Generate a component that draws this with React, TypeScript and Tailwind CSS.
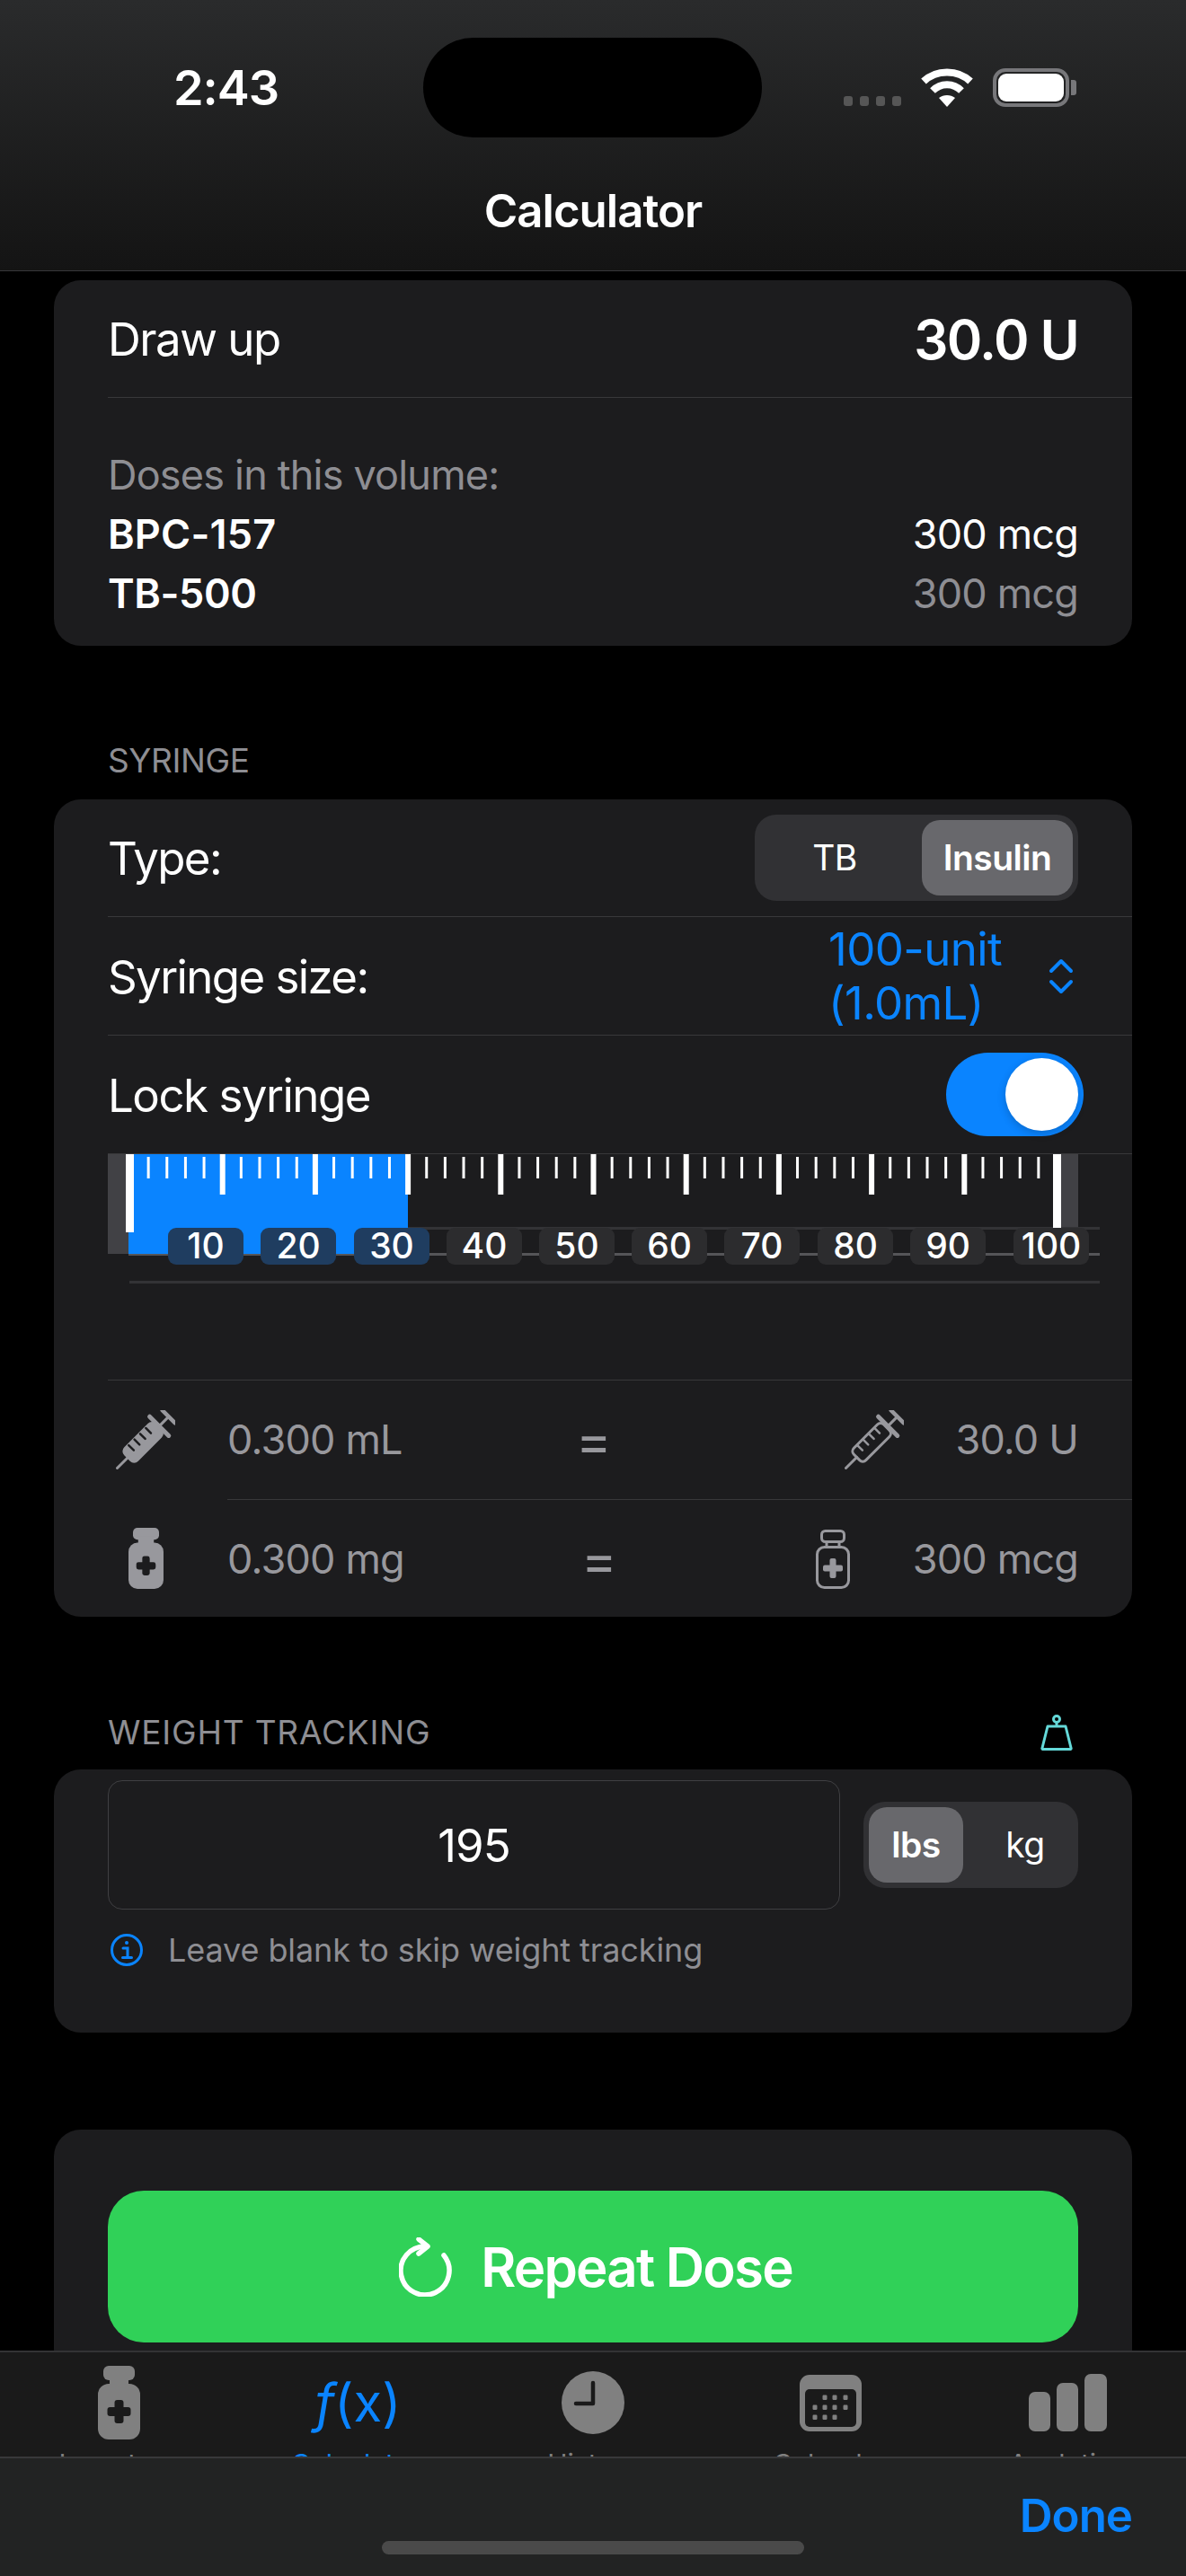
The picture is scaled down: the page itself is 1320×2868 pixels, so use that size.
const BLUE = '#0a84ff'

const TICKS = Array.from({ length: 51 }, (_, i) => i * 2)
const TAG_X = [229, 332, 436, 539, 642, 745, 848, 952, 1055, 1170]
const unitX = (u: number) => 24.5 + u * 10.32

const TABS = [
  { label: 'Inventory', icon: <Vial w={47} h={82} fill="#808080" cut="#1a1a1a" /> },
  {
    label: 'Calculator',
    icon: (
      <span className="pl-[5px] text-[58px] leading-none text-[#0a84ff]">
        <span className="italic">f</span>(x)
      </span>
    ),
    active: true,
  },
  { label: 'History', icon: <ClockIcon /> },
  { label: 'Calendar', icon: <CalendarIcon /> },
  { label: 'Analytics', icon: <BarsIcon /> },
]

function Vial({ w, h, fill, cut }: { w: number; h: number; fill: string; cut: string }) {
  return (
    <svg width={w} height={h} viewBox="0 0 47 82" fill={fill}>
      <rect x="6" y="0" width="35" height="16" rx="6" />
      <rect x="13" y="12" width="21" height="12" />
      <rect x="0" y="20" width="47" height="62" rx="12" />
      <rect x="18.5" y="38" width="10" height="26" rx="3" fill={cut} />
      <rect x="10.5" y="46" width="26" height="10" rx="3" fill={cut} />
    </svg>
  )
}

function VialOutline() {
  return (
    <svg width="38" height="66" viewBox="0 0 38 66" fill="none" stroke="#98989d" strokeWidth="3">
      <rect x="6.5" y="1.5" width="25" height="12" rx="4" />
      <path d="M12 14v6M26 14v6" />
      <rect x="1.5" y="19.5" width="35" height="45" rx="8" />
      <rect x="15.5" y="32" width="7" height="22" rx="2" fill="#98989d" stroke="none" />
      <rect x="8" y="39.5" width="22" height="7" rx="2" fill="#98989d" stroke="none" />
    </svg>
  )
}

function Syringe({ filled }: { filled?: boolean }) {
  return (
    <svg width="66" height="66" viewBox="0 0 66 66" fill="none" stroke="#98989d" strokeWidth="3" strokeLinecap="round">
      <g transform="translate(1.5 64.5) rotate(-45)">
        <path d="M0 0H17" />
        <rect x="17" y="-9.5" width="47" height="19" rx="5" fill={filled ? '#98989d' : 'none'} />
        {[27, 36, 45, 54].map(x => (
          <path key={x} d={`M${x} -9V-1`} stroke={filled ? '#1c1c1e' : '#98989d'} strokeWidth="2.5" />
        ))}
        <path d="M66 -15V15" strokeWidth="5" />
        <path d="M66 0H80" />
        <path d="M81 -10V10" strokeWidth="4.5" />
      </g>
    </svg>
  )
}

function ClockIcon() {
  return (
    <svg width="70" height="70" viewBox="0 0 70 70">
      <circle cx="35" cy="35" r="35" fill="#808080" />
      <path d="M35 13V36H16" fill="none" stroke="#1a1a1a" strokeWidth="4.5" strokeLinecap="round" strokeLinejoin="round" />
    </svg>
  )
}

function CalendarIcon() {
  const dots = [
    [28, 25], [39, 25], [51, 25],
    [17, 36], [28, 36], [39, 36], [51, 36],
    [17, 47], [28, 47], [39, 47],
  ]
  return (
    <svg width="69" height="63" viewBox="0 0 69 63">
      <rect width="69" height="63" rx="11" fill="#808080" />
      <rect x="6" y="16" width="57" height="42" rx="5" fill="#1a1a1a" />
      {dots.map(([x, y]) => (
        <rect key={`${x}-${y}`} x={x - 2.5} y={y - 2.5} width="5" height="5.5" rx="1.2" fill="#808080" />
      ))}
    </svg>
  )
}

function BarsIcon() {
  return (
    <svg width="87" height="64" viewBox="0 0 87 64" fill="#808080">
      <rect x="0" y="20" width="24" height="44" rx="7" />
      <rect x="31" y="10" width="24" height="54" rx="7" />
      <rect x="62" y="0" width="25" height="64" rx="7" />
    </svg>
  )
}

function SyringeRuler() {
  return (
    <svg width="1140" height="251" viewBox="0 0 1140 251" className="block">
      <rect x="0" y="0" width="23" height="111" fill="#414145" />
      <rect x="1061" y="0" width="19" height="81" fill="#414145" />
      <rect x="23" y="81" width="1081" height="3" fill="#333336" />
      <rect x="23" y="110" width="1081" height="3" fill="#555558" />
      <rect x="24" y="141" width="1080" height="3" fill="#333336" />
      <rect x="23" y="0" width="311" height="111" fill={BLUE} />
      {TICKS.map(u => {
        const major = u % 10 === 0
        const end = u === 0 || u === 100
        const x = unitX(u)
        if (end) return <rect key={u} x={u === 0 ? 20 : 1052} y="0" width="9" height="87" fill="#fff" />
        return major ? (
          <rect key={u} x={x - 3} y="0" width="6" height="45" fill="#fff" />
        ) : (
          <rect key={u} x={x - 1.5} y="3" width="3" height="24" fill="#fff" />
        )
      })}
      {TAG_X.map((x, i) => {
        const cx = x - 120
        return (
          <g key={x}>
            <rect x={cx - 42} y="82" width="84" height="41" rx="9" fill={i < 3 ? '#1f3d60' : '#2c2c2e'} />
            <text x={cx} y="116" textAnchor="middle" fontSize="39" fontWeight="500" fill="#fff" fontFamily="Inter, sans-serif">
              {(i + 1) * 10}
            </text>
          </g>
        )
      })}
    </svg>
  )
}

function Segmented({ left, right, active }: { left: string; right: string; active: 'left' | 'right' }) {
  const on = 'bg-[#68686c] font-semibold rounded-[20px]'
  return (
    <div className="flex h-[96px] items-stretch rounded-[24px] bg-[#313134] p-[6px] text-[39px] tracking-[-0.5px] text-white">
      <div className={`flex items-center justify-center ${active === 'left' ? on : ''} ${left === 'lbs' ? 'w-[105px]' : 'w-[180px] pr-[14px]'}`}>
        {left}
      </div>
      <div className={`flex items-center justify-center ${active === 'right' ? on : ''} ${right === 'kg' ? 'w-[122px] pl-[16px]' : 'w-[168px]'}`}>
        {right}
      </div>
    </div>
  )
}

function SectionLabel({ children }: { children: React.ReactNode }) {
  return (
    <div className="flex h-[46px] items-center justify-between pl-[60px] pr-[65px] pt-[2px] text-[37px] leading-[46px] tracking-[-0.4px] text-[#8e8e93]">
      {children}
    </div>
  )
}

export default function App() {
  return (
    <div className="flex h-[2868px] w-[1320px] flex-col overflow-hidden bg-black text-white [font-family:Inter,'Noto_Sans',sans-serif]">
      {/* status + nav */}
      <header className="relative h-[302px] shrink-0 border-b border-[#38383a] bg-gradient-to-b from-[#2a2b2c] to-[#141414]">
        <div className="flex h-[194px] items-center">
          <div className="flex w-[471px] justify-center pl-[32px] text-[54px] font-semibold tracking-[-1px]">2:43</div>
          <div className="h-[111px] w-[377px] rounded-[56px] bg-black" />
          <div className="ml-[91px] flex items-end gap-[22px]">
            <div className="mb-[1px] flex gap-[8px]">
              {[0, 1, 2, 3].map(i => (
                <div key={i} className="h-[11px] w-[10px] rounded-[3px] bg-[#565656]" />
              ))}
            </div>
            <svg width="58" height="43" viewBox="0 0 58 43" fill="none" stroke="#fff" strokeWidth="8">
              <path d="M3 14.5C17 1 41 1 55 14.5" />
              <path d="M13 25C22 16 36 16 45 25" />
              <path d="M29 43L20 33C25 29 33 29 38 33Z" fill="#fff" stroke="none" />
            </svg>
            <div className="flex items-center">
              <div className="h-[43px] w-[85px] rounded-[14px] border-[4px] border-[#77777a] p-[2px]">
                <div className="h-full w-full rounded-[9px] bg-white" />
              </div>
              <div className="ml-[2px] h-[17px] w-[6px] rounded-r-[3px] bg-[#77777a]" />
            </div>
          </div>
        </div>
        <div className="mt-[9px] text-center text-[51px] font-semibold leading-[64px] tracking-[-1px]">Calculator</div>
      </header>

      <main className="flex-1 overflow-hidden px-[60px] pt-[10px]">
        {/* dose summary */}
        <section className="h-[407px] rounded-[30px] bg-[#1c1c1e]">
          <div className="ml-[60px] flex h-[131px] items-center justify-between border-b border-[#38383a] pr-[60px] pt-[2px]">
            <span className="text-[51px] tracking-[-1.5px]">Draw up</span>
            <span className="text-[60px] font-semibold tracking-[-1.6px]">30.0 U</span>
          </div>
          <div className="px-[60px] pt-[53px] text-[45px] leading-[66px] tracking-[-0.8px]">
            <div className="text-[#8e8e93]">Doses in this volume:</div>
            <div className="flex justify-between">
              <span className="font-semibold tracking-[0.2px]">BPC-157</span>
              <span>300 mcg</span>
            </div>
            <div className="flex justify-between">
              <span className="font-semibold tracking-[-0.4px]">TB-500</span>
              <span className="text-[#8e8e93]">300 mcg</span>
            </div>
          </div>
        </section>

        <div className="mt-[104px] mb-[21px]">
          <SectionLabel>SYRINGE</SectionLabel>
        </div>
        <section className="h-[910px] rounded-[30px] bg-[#1c1c1e]">
          <div className="ml-[60px] flex h-[131px] items-center justify-between border-b border-[#38383a] pr-[60px] text-[51px] tracking-[-1.6px]">
            <span className="pt-[3px]">Type:</span>
            <Segmented left="TB" right="Insulin" active="right" />
          </div>
          <div className="ml-[60px] flex h-[132px] items-center justify-between border-b border-[#38383a] pr-[60px] text-[51px] tracking-[-1.6px]">
            <span className="pt-[3px]">Syringe size:</span>
            <div className="flex items-center text-[#0a84ff]">
              <div className="w-[245px] leading-[60px] tracking-[-0.6px]">
                100-unit
                <br />
                (1.0mL)
              </div>
              <svg width="28" height="40" viewBox="0 0 28 40" fill="none" stroke="#0a84ff" strokeWidth="4" strokeLinecap="round" strokeLinejoin="round" className="mr-[5px]">
                <path d="M3 14L14 3L25 14" />
                <path d="M3 26L14 37L25 26" />
              </svg>
            </div>
          </div>
          <div className="ml-[60px] flex h-[132px] items-center justify-between border-b border-[#38383a] pr-[54px] text-[51px] tracking-[-1.5px]">
            <span className="pt-[3px]">Lock syringe</span>
            <div className="flex h-[93px] w-[153px] items-center justify-end rounded-full bg-[#0a84ff] pr-[6px]">
              <div className="h-[81px] w-[81px] rounded-full bg-white shadow-[0_3px_10px_rgba(0,0,0,0.2)]" />
            </div>
          </div>
          <div className="ml-[60px] h-[252px] border-b border-[#38383a]">
            <SyringeRuler />
          </div>
          <div className="ml-[60px] flex h-[132px] items-center pr-[60px] text-[45px] tracking-[-0.8px] text-[#98989d]">
            <div className="flex w-[84px] justify-center">
              <Syringe filled />
            </div>
            <span className="ml-[49px] w-[388px]">0.300 mL</span>
            <span className="text-[60px] leading-none">=</span>
            <div className="ml-auto flex items-center gap-[57px]">
              <Syringe />
              <span>30.0 U</span>
            </div>
          </div>
          <div className="ml-[60px] flex h-[132px] items-center pr-[60px] text-[45px] tracking-[-0.8px] text-[#98989d]">
            <div className="flex w-[84px] justify-center">
              <Vial w={39} h={68} fill="#98989d" cut="#1c1c1e" />
            </div>
            <div className="ml-[49px] -mr-[60px] flex h-full flex-1 items-center border-t border-[#38383a] pr-[60px]">
              <span className="w-[394px]">0.300 mg</span>
              <span className="text-[60px] leading-none">=</span>
              <div className="ml-auto flex items-center gap-[70px]">
                <VialOutline />
                <span>300 mcg</span>
              </div>
            </div>
          </div>
        </section>

        <div className="mt-[105px] mb-[19px]">
          <SectionLabel>
            <span className="tracking-[0.8px]">WEIGHT TRACKING</span>
            <svg width="38" height="40" viewBox="0 0 38 40" fill="none" stroke="#64d8d8" strokeWidth="3">
              <circle cx="19" cy="5" r="3.5" />
              <path d="M19 9v4" />
              <path d="M9 13h20l6 24a1 1 0 0 1-1 1.5H4a1 1 0 0 1-1-1.5Z" strokeLinejoin="round" />
            </svg>
          </SectionLabel>
        </div>
        <section className="h-[293px] rounded-[30px] bg-[#1c1c1e] px-[60px] pt-[12px]">
          <div className="flex items-center justify-between">
            <div className="flex h-[144px] w-[815px] items-center justify-center rounded-[16px] border border-[#3f3f42] pt-[2px] text-[51px] tracking-[-1px]">
              195
            </div>
            <Segmented left="lbs" right="kg" active="left" />
          </div>
          <div className="mt-[18px] flex items-center text-[36px] tracking-[-0.1px] text-[#8e8e93]">
            <svg width="36" height="36" viewBox="0 0 36 36" fill="none" stroke="#0a84ff" strokeWidth="3" className="ml-[3px]">
              <circle cx="18" cy="18" r="16.5" />
              <path d="M14 16h5v10M13.5 26.5h10" strokeLinecap="round" />
              <circle cx="18" cy="10" r="2" fill="#0a84ff" stroke="none" />
            </svg>
            <span className="ml-[28px]">Leave blank to skip weight tracking</span>
          </div>
        </section>

        <section className="mt-[108px] h-[400px] rounded-[30px] bg-[#1c1c1e] px-[60px] pt-[68px]">
          <button className="flex h-[169px] w-full items-center justify-center rounded-[40px] bg-[#30d158] pl-[6px] text-[60px] font-semibold tracking-[-1.8px] text-white">
            <svg width="60" height="66" viewBox="0 0 60 66" fill="none" stroke="#fff" strokeWidth="5.5" strokeLinecap="round" strokeLinejoin="round" className="mr-[31px]">
              <path d="M50 20A27 27 0 1 1 30 10" />
              <path d="M22 2l10 8-10 8" />
            </svg>
            Repeat Dose
          </button>
        </section>
      </main>

      {/* tabs, clipped by the keyboard accessory bar */}
      <nav className="grid h-[118px] shrink-0 grid-cols-5 overflow-hidden border-t-[2px] border-[#333335] bg-[#1a1a1a] text-center text-[30px]">
        {TABS.map(t => (
          <div key={t.label} className={t.active ? 'text-[#0a84ff]' : 'text-[#808080]'}>
            <div className="flex h-[112px] items-center justify-center">{t.icon}</div>
            <div className="-mt-[6px] leading-[36px]">{t.label}</div>
          </div>
        ))}
      </nav>

      <div className="relative h-[133px] shrink-0 border-t-[2px] border-[#38383a] bg-[#222323]">
        <div className="flex justify-end pr-[60px] pt-[32px] text-[51px] font-semibold leading-[64px] tracking-[-1px] text-[#0a84ff]">Done</div>
        <div className="absolute bottom-[24px] left-[425px] h-[15px] w-[470px] rounded-full bg-[#4a4a4a]" />
      </div>
    </div>
  )
}
